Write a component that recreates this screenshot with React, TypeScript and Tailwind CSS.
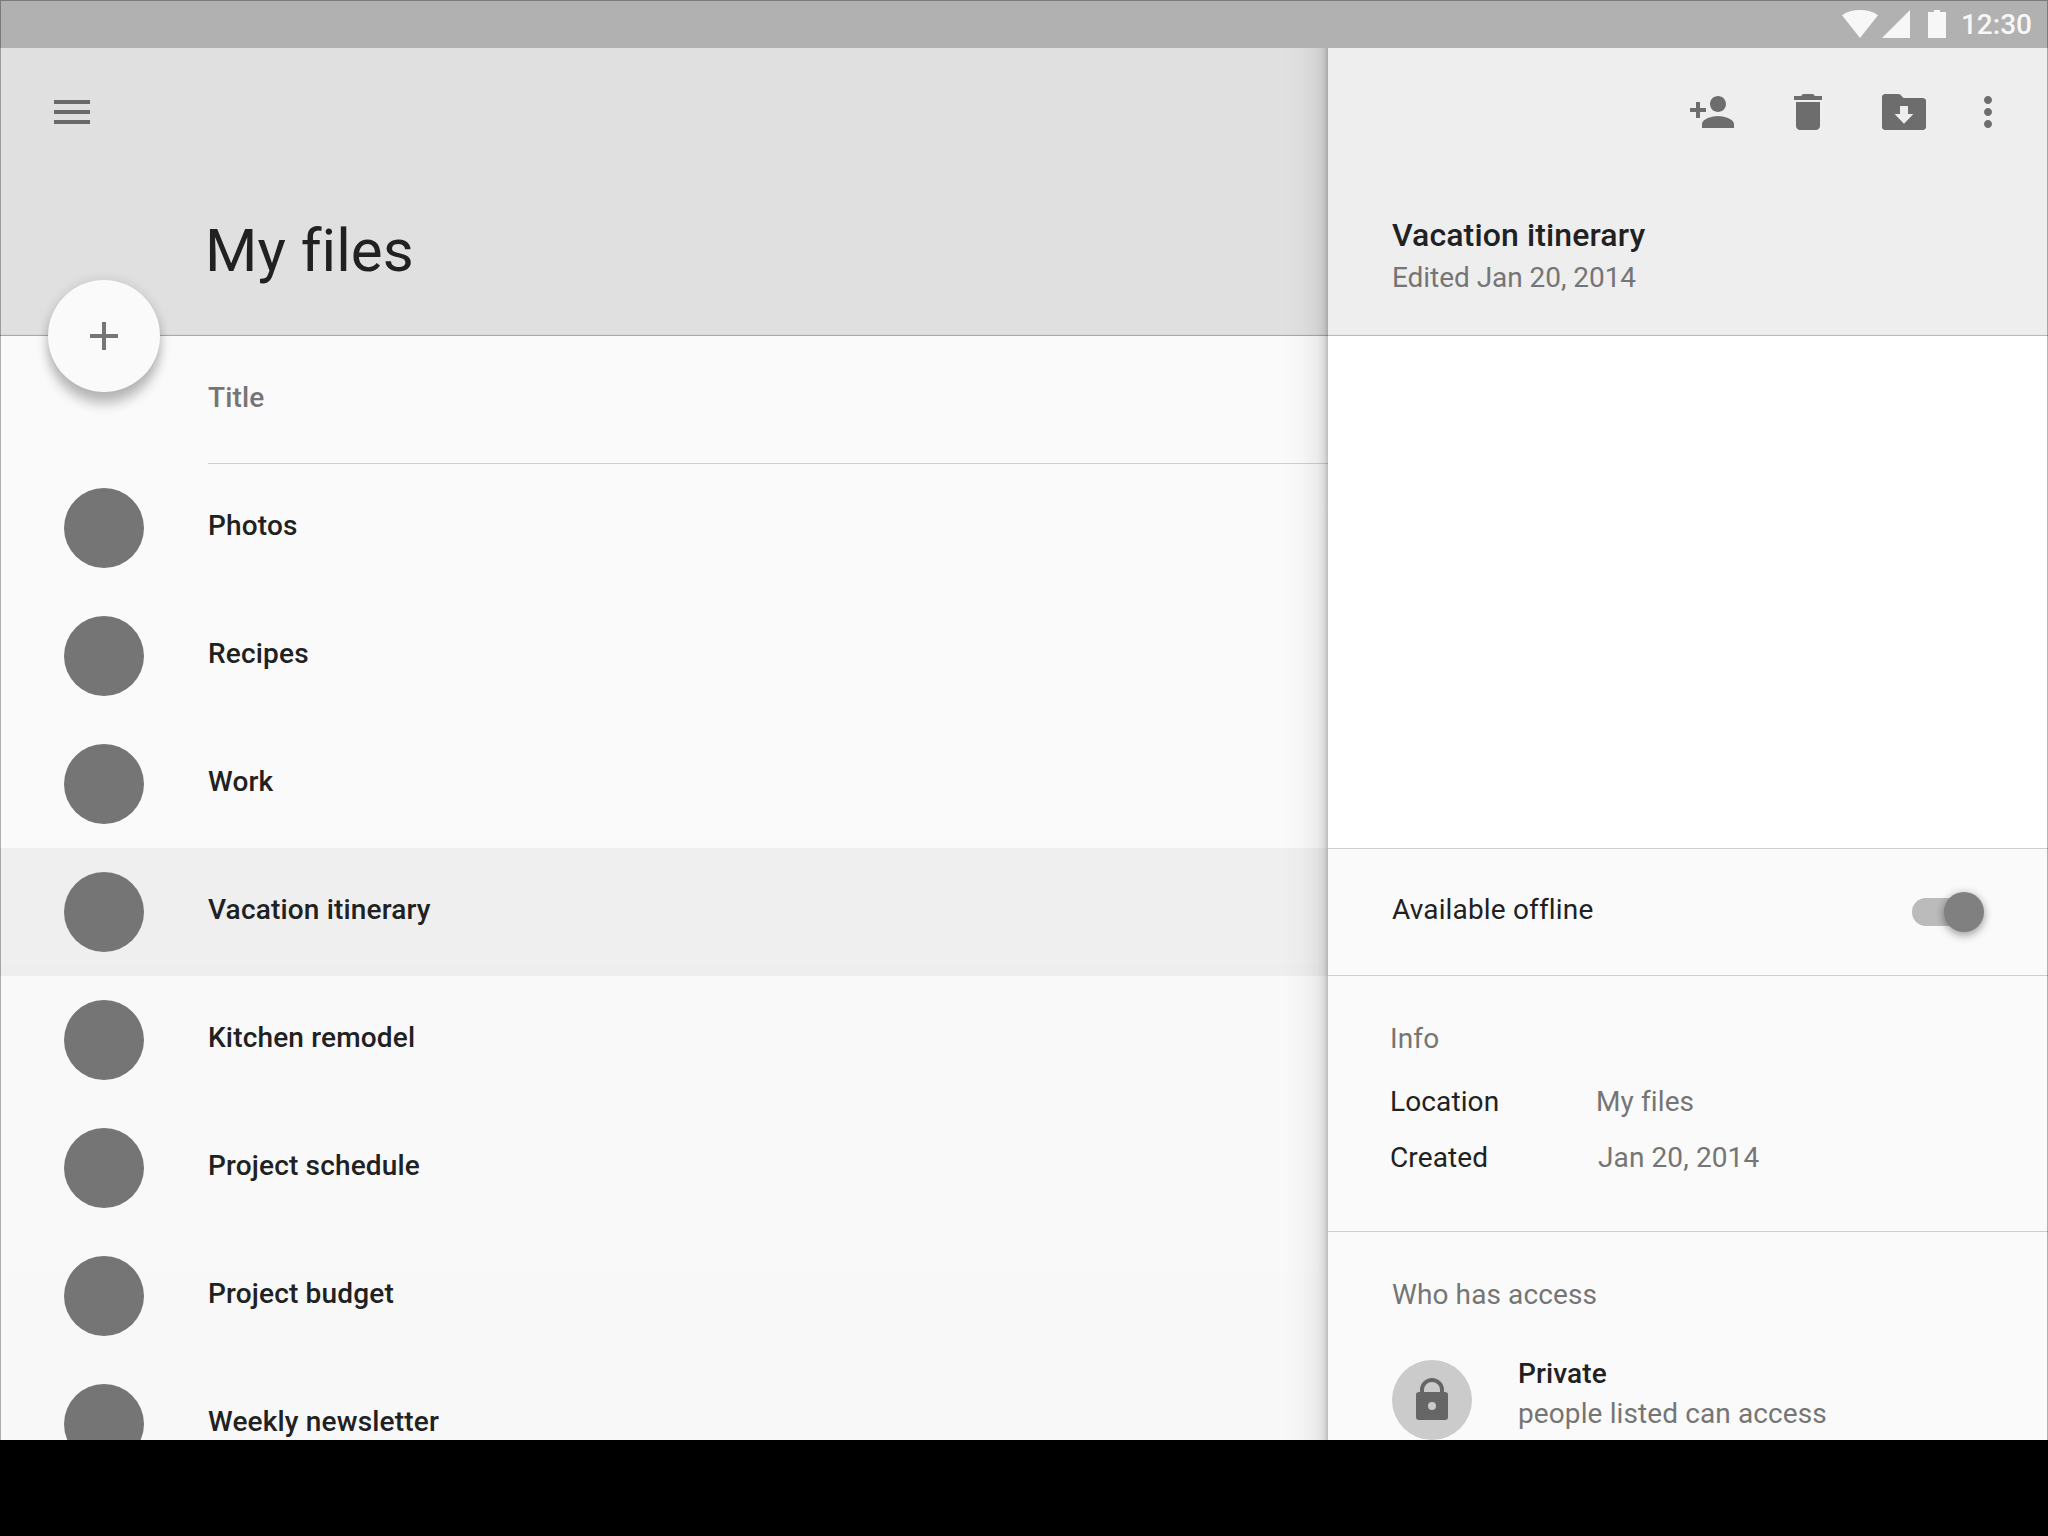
import type { ReactNode } from "react";

const files = [
  { name: "Photos" },
  { name: "Recipes" },
  { name: "Work" },
  { name: "Vacation itinerary", selected: true },
  { name: "Kitchen remodel" },
  { name: "Project schedule" },
  { name: "Project budget" },
  { name: "Weekly newsletter" },
];

function Icon({ children }: { children: ReactNode }) {
  return (
    <svg viewBox="0 0 24 24" className="block size-12 shrink-0" fill="currentColor">
      {children}
    </svg>
  );
}

function StatusBar() {
  return (
    <div className="flex h-12 shrink-0 items-start bg-[#b1b1b1] pr-4 text-[#f7f7f7]">
      <svg className="ml-auto mt-2.5 block h-7 w-9" viewBox="0 0 36 28" fill="currentColor">
        <path d="M0 5.2C5 1.6 11 0 18 0s13 1.6 18 5.2L18 28z" />
      </svg>
      <svg className="ml-1 mt-2.5 block size-7" viewBox="0 0 28 28" fill="currentColor">
        <path d="M28 0v28H0z" />
      </svg>
      <svg className="ml-[18px] mt-2.5 block h-7 w-[18px]" viewBox="0 0 18 28" fill="currentColor">
        <path d="M6 0h6v2h6v26H0V2h6z" />
      </svg>
      <span className="ml-[15px] pt-px text-[28px] leading-12 font-medium">12:30</span>
    </div>
  );
}

function FileList() {
  return (
    <main className="flex w-[1328px] shrink-0 flex-col">
      <header className="relative flex h-72 shrink-0 flex-col border-b border-[#a9a9a9] bg-[#e0e0e0] shadow-[inset_0_-1px_0_rgba(0,0,0,0.03)]">
        <button className="ml-12 mt-10 size-12 text-[#696969]">
          <Icon>
            <path d="M3 18h18v-2H3v2zm0-5h18v-2H3v2zm0-7v2h18V6H3z" />
          </Icon>
        </button>
        <h1 className="ml-[205px] mt-[79px] text-[60px] leading-[72px] tracking-[0.02px]">My files</h1>
        <button className="absolute left-12 top-[232px] flex size-28 items-center justify-center rounded-full bg-[#fafafa] text-[#757575] shadow-[0_12px_12px_rgba(0,0,0,0.24),0_0_12px_rgba(0,0,0,0.12)]">
          <Icon>
            <path d="M19 13h-6v6h-2v-6H5v-2h6V5h2v6h6v2z" />
          </Icon>
        </button>
      </header>
      <div className="flex grow flex-col bg-[linear-gradient(to_bottom,#fafafa_628px,#f9f9f9_628px,#f9f9f9_936px,#f8f8f8_936px)]">
        <div className="ml-52 h-32 shrink-0 border-b border-[#cfcfcf]">
          <div className="pt-[46px] text-[28px] leading-8 font-medium tracking-[0.15px] text-[#757575]">Title</div>
        </div>
        {files.map((file) => (
          <div
            key={file.name}
            className={`flex h-32 shrink-0 items-center pl-16 ${file.selected ? "bg-black/[0.044]" : ""}`}
          >
            <span className="size-20 rounded-full bg-[#757575]" />
            <span className="ml-16 pb-1 text-[28px] leading-9 font-medium tracking-[0.17px]">{file.name}</span>
          </div>
        ))}
      </div>
    </main>
  );
}

function Switch() {
  return (
    <div className="relative h-10 w-[72px]">
      <div className="mt-1.5 h-7 w-16 rounded-full bg-[#bbbbbb]" />
      <div className="absolute right-0 top-0 size-10 rounded-full bg-[#808080] shadow-[0_4px_8px_rgba(0,0,0,0.28),0_0_8px_rgba(0,0,0,0.16)]" />
    </div>
  );
}

function DetailPanel() {
  return (
    <aside className="relative flex w-[720px] shrink-0 flex-col bg-[#fafafa] text-[28px] leading-8 tracking-[0.11px]">
      <div className="pointer-events-none absolute inset-y-0 -left-12 w-12 bg-[linear-gradient(to_right,rgba(0,0,0,0)_0%,rgba(0,0,0,0.012)_40%,rgba(0,0,0,0.03)_60%,rgba(0,0,0,0.06)_77%,rgba(0,0,0,0.11)_90%,rgba(0,0,0,0.24)_100%)]" />
      <header className="flex h-72 shrink-0 flex-col border-b border-[#b9b9b9] bg-[#eeeeee] shadow-[inset_0_-1px_0_rgba(0,0,0,0.02)]">
        <div className="mt-10 flex justify-end gap-12 pr-9 text-[#6d6d6d]">
          <Icon>
            <path d="M15 12c2.21 0 4-1.79 4-4s-1.79-4-4-4-4 1.79-4 4 1.79 4 4 4zm-9-2V7H4v3H1v2h3v3h2v-3h3v-2H6zm9 4c-2.67 0-8 1.34-8 4v2h16v-2c0-2.66-5.33-4-8-4z" />
          </Icon>
          <Icon>
            <path d="M6 19c0 1.1.9 2 2 2h8c1.1 0 2-.9 2-2V7H6v12zM19 4h-3.5l-1-1h-5l-1 1H5v2h14V4z" />
          </Icon>
          <Icon>
            <path
              fillRule="evenodd"
              d="M2.5 3h6.6c.5 0 .8.1 1.1.4L11.8 5h9.7c.8 0 1.5.7 1.5 1.5v13c0 .8-.7 1.5-1.5 1.5h-19C1.700 21 1 20.3 1 19.500v-15C1 3.700 1.700 3 2.500 3zM10 9v4H7.300l4.700 4.900 4.700-4.900H14V9z"
            />
          </Icon>
          <span className="-ml-3">
            <Icon>
              <path d="M12 8c1.1 0 2-.9 2-2s-.9-2-2-2-2 .9-2 2 .9 2 2 2zm0 2c-1.1 0-2 .9-2 2s.9 2 2 2 2-.9 2-2-.9-2-2-2zm0 6c-1.1 0-2 .9-2 2s.9 2 2 2 2-.9 2-2-.9-2-2-2z" />
            </Icon>
          </span>
        </div>
        <h2 className="ml-16 mt-[77px] text-[32px] leading-11 font-medium tracking-[0.12px]">Vacation itinerary</h2>
        <p className="ml-16 mt-[5px] tracking-[-0.05px] text-[#757575]">Edited Jan 20, 2014</p>
      </header>
      <div className="h-[512px] shrink-0 bg-white" />
      <div className="flex h-32 shrink-0 items-center justify-between border-y border-[#cfcfcf] pl-16 pr-16">
        <span className="pb-1 tracking-[0.16px]">Available offline</span>
        <Switch />
      </div>
      <section className="flex h-64 shrink-0 flex-col border-b border-[#cfcfcf] pl-[62px] pt-[47px]">
        <h3 className="text-[#757575]">Info</h3>
        <dl className="mt-[31px] grid grid-cols-[206px_auto] gap-y-6">
          <dt>Location</dt>
          <dd className="text-[#757575]">My files</dd>
          <dt>Created</dt>
          <dd className="pl-0.5 text-[#757575]">Jan 20, 2014</dd>
        </dl>
      </section>
      <section className="flex flex-col pl-16 pt-[47px]">
        <h3 className="text-[#757575]">Who has access</h3>
        <div className="mt-[49px] flex">
          <span className="flex size-20 items-center justify-center rounded-full bg-[#cbcbcb] text-[#666666]">
            <Icon>
              <path
                fillRule="evenodd"
                d="M6 8V7a6 6 0 0 1 12 0v1h.5A1.500 1.500 0 0 1 20 9.500v11a1.500 1.500 0 0 1-1.500 1.500h-13A1.500 1.500 0 0 1 4 20.500v-11A1.500 1.500 0 0 1 5.500 8zM8 8h8V7a4 4 0 0 0-8 0zM12 13a2 2 0 1 0 0 4 2 2 0 0 0 0-4z"
              />
            </Icon>
          </span>
          <div className="ml-[46px] flex flex-col gap-2">
            <span className="-mt-0.5 font-medium">Private</span>
            <span className="text-[#757575]">people listed can access</span>
          </div>
        </div>
      </section>
    </aside>
  );
}

export default function App() {
  return (
    <div className="h-[1536px] w-[2048px] overflow-hidden bg-black font-['Roboto',sans-serif] text-[#212121]">
      <div className="relative flex h-[1440px] flex-col overflow-hidden">
        <StatusBar />
        <div className="flex h-[1392px]">
          <FileList />
          <DetailPanel />
        </div>
        <div className="pointer-events-none absolute inset-0 border-x border-t border-black/30" />
      </div>
    </div>
  );
}
